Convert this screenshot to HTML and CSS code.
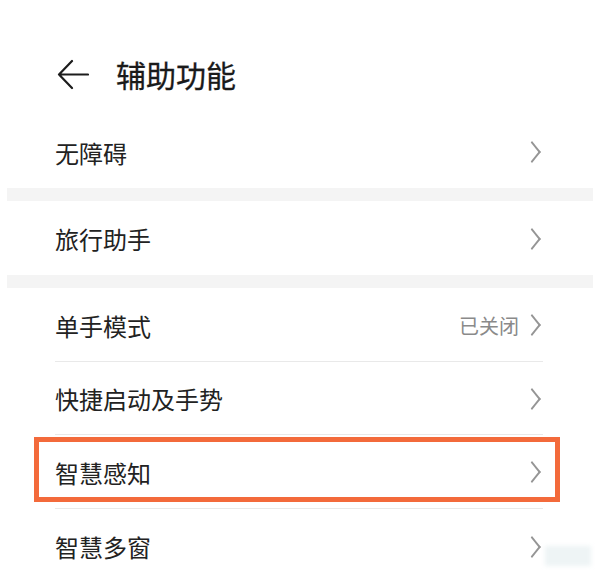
FILE: index.html
```html
<!DOCTYPE html>
<html lang="zh-CN">
<head>
<meta charset="utf-8">
<title>辅助功能</title>
<link rel="stylesheet" href="styles.css">
</head>
<body>
<div class="page">
  <header class="header">
    <svg class="back" width="32" height="31" viewBox="0 0 32 31" aria-hidden="true">
      <path d="M15 2 L2 15.5 L15 29 M2 15.5 H31" fill="none" stroke="#1c1c1c" stroke-width="2.2" stroke-linecap="round" stroke-linejoin="round"/>
    </svg>
    <h1 class="title">辅助功能</h1>
  </header>

  <section class="group">
    <div class="row row-first"><span class="label">无障碍</span><span class="chev"></span></div>
  </section>
  <div class="band"></div>
  <section class="group">
    <div class="row"><span class="label">旅行助手</span><span class="chev"></span></div>
  </section>
  <div class="band"></div>
  <section class="group">
    <div class="row row-a"><span class="label">单手模式</span><span class="value">已关闭</span><span class="chev"></span></div>
    <div class="row row-b"><span class="label">快捷启动及手势</span><span class="chev"></span></div>
    <div class="row row-a"><span class="label">智慧感知</span><span class="chev"></span><span class="highlight"></span></div>
    <div class="row row-last"><span class="label">智慧多窗</span><span class="chev"></span><span class="smudge"></span></div>
  </section>
</div>
</body>
</html>
```

FILE: styles.css
```css
* { box-sizing: border-box; }
html, body {
  margin: 0;
  padding: 0;
  background: #ffffff;
}
body {
  font-family: "Noto Sans CJK SC", "Noto Sans", sans-serif;
  color: #1f1f1f;
  width: 600px;
  height: 579px;
  overflow: hidden;
}
.page {
  display: flex;
  flex-direction: column;
}
.header {
  display: flex;
  align-items: center;
  height: 48px;
  margin-top: 50px;
  margin-bottom: 17px;
  padding-left: 57px;
}
.back {
  display: block;
  flex: none;
}
.title {
  margin: 0 0 0 27px;
  font-size: 30px;
  font-weight: 400;
  line-height: 48px;
  color: #1a1a1a;
  -webkit-text-stroke: 0.3px #1a1a1a;
}
.group {
  display: flex;
  flex-direction: column;
  padding: 0 57px 0 55px;
}
.row {
  position: relative;
  display: flex;
  align-items: center;
  height: 74px;
  border-bottom: 1px solid #e9e9e9;
}
.row-first { height: 73px; }
.row-a { height: 74px; }
.row-b { height: 73px; }
.group .row:last-child { border-bottom: none; }
.label {
  flex: 1;
  font-size: 24px;
  line-height: 30px;
  padding-top: 2px;
  color: #222222;
}
.value {
  font-size: 20px;
  line-height: 26px;
  padding-top: 2px;
  color: #8a8a8a;
  margin-right: 10px;
}
.chev {
  flex: none;
  width: 12px;
  height: 20px;
  margin-right: 2px;
  margin-top: 1px;
  position: relative;
}
.chev::before {
  content: "";
  position: absolute;
  left: -4px;
  top: 3px;
  width: 12px;
  height: 12px;
  border-top: 2px solid #959595;
  border-right: 2px solid #959595;
  transform: rotate(45deg) skew(6deg, 6deg);
}
.band {
  height: 13px;
  margin: 0 7px;
  background: #f4f4f4;
}
.highlight {
  position: absolute;
  left: -21px;
  right: -17px;
  top: 2px;
  bottom: 6px;
  border: 5px solid #f36a3b;
  pointer-events: none;
}
.smudge {
  position: absolute;
  left: 490px;
  top: 37px;
  width: 46px;
  height: 20px;
  background: #eef4f5;
  filter: blur(2px);
}
```
